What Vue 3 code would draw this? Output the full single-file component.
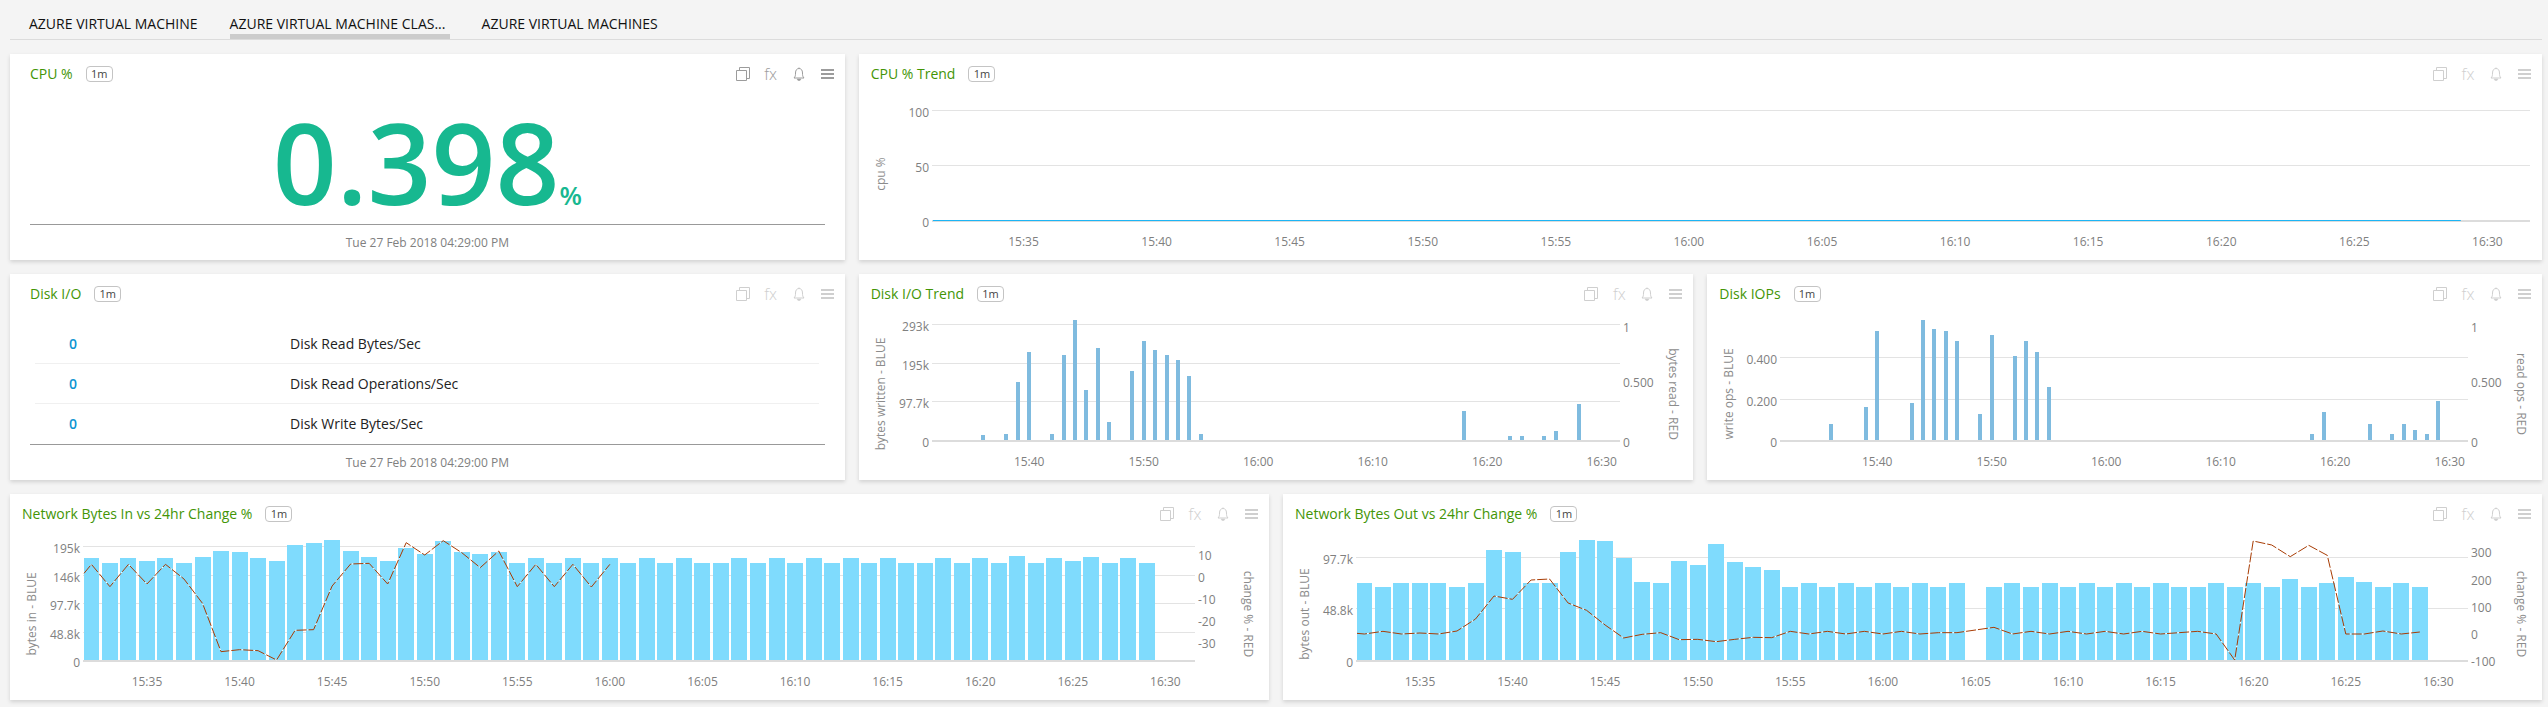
<script setup>
import { onBeforeUnmount, onMounted, reactive, ref } from 'vue'

const tabs = ['AZURE VIRTUAL MACHINE', 'AZURE VIRTUAL MACHINE CLAS...', 'AZURE VIRTUAL MACHINES']
const activeTab = ref(1)

// Minutes are counted from 15:00. Every chart shows one hour of data.
const START = 31.6
const SPAN = 60
const BASE = 126

const series = (first, levels) =>
  levels.map((level, i) => [first + i, level]).filter((p) => p[1] !== null)

// Levels are on a 360-step scale over the 120px plot height.
const rise = (level) => level / 3

const every = (first, step) => {
  const out = []
  for (let m = first; m <= 90; m += step) {
    out.push({ m, text: `${m < 60 ? 15 : 16}:${String(m % 60).padStart(2, '0')}` })
  }
  return out
}

const stamp = 'Tue 27 Feb 2018 04:29:00 PM'

const cards = [
  { id: 'cpu', title: 'CPU %', kind: 'number', size: 'third', value: '0.398', unit: '%' },
  {
    id: 'cpu-trend', title: 'CPU % Trend', kind: 'chart', size: 'wide', right: 12,
    grid: [[16, '100'], [71, '50'], [126, '0']], ticks: every(35, 5),
    leftTitle: 'cpu %', flat: [START, 89]
  },
  {
    id: 'disk', title: 'Disk I/O', kind: 'table', size: 'third',
    rows: [['0', 'Disk Read Bytes/Sec'], ['0', 'Disk Read Operations/Sec'], ['0', 'Disk Write Bytes/Sec']]
  },
  {
    id: 'disk-trend', title: 'Disk I/O Trend', kind: 'chart', size: 'third', right: 74,
    grid: [[10, '293k'], [49, '195k'], [87, '97.7k'], [126, '0']], ticks: every(40, 10),
    leftTitle: 'bytes written - BLUE', rightTitle: 'bytes read - RED',
    rightTicks: [[18, '1'], [73, '0.500'], [133, '0']],
    tone: 'steel', barWidth: 4,
    bars: [[36, 15], [38, 18], [39, 174], [40, 264], [42, 18], [43, 255], [44, 360], [45, 150], [46, 276],
      [47, 54], [49, 207], [50, 297], [51, 270], [52, 255], [53, 240], [54, 192], [55, 18], [78, 87],
      [82, 12], [83, 12], [85, 12], [86, 27], [88, 108]]
  },
  {
    id: 'disk-iops', title: 'Disk IOPs', kind: 'chart', size: 'third', right: 74,
    grid: [[43, '0.400'], [85, '0.200'], [126, '0']], ticks: every(40, 10),
    leftTitle: 'write ops - BLUE', rightTitle: 'read ops - RED',
    rightTicks: [[18, '1'], [73, '0.500'], [133, '0']],
    tone: 'steel', barWidth: 4,
    bars: [[36, 48], [39, 99], [40, 327], [43, 111], [44, 360], [45, 333], [46, 327], [47, 297], [49, 78],
      [50, 315], [52, 252], [53, 297], [54, 264], [55, 159], [78, 18], [79, 84], [83, 48], [85, 18],
      [86, 48], [87, 30], [88, 18], [89, 117]]
  },
  {
    id: 'net-in', title: 'Network Bytes In vs 24hr Change %', kind: 'chart', size: 'half', right: 74,
    grid: [[12, '195k'], [41, '146k'], [69, '97.7k'], [98, '48.8k'], [126, '0']], ticks: every(35, 5),
    leftTitle: 'bytes in - BLUE', rightTitle: 'change % - RED',
    rightTicks: [[26, '10'], [48, '0'], [70, '-10'], [92, '-20'], [114, '-30']],
    tone: 'sky', barWidth: 16,
    bars: series(32, [306, 291, 306, 297, 306, 291, 309, 327, 324, 306, 297, 345, 351, 360, 327, 309, 297,
      336, 318, 357, 324, 318, 324, 291, 306, 291, 306, 291, 306, 291, 306, 291, 306, 291, 291, 306, 291,
      306, 291, 306, 291, 306, 291, 306, 291, 291, 306, 291, 306, 291, 312, 291, 306, 297, 309, 291, 306, 291]),
    line: [[START, 260], ...series(32, [287, 220, 287, 228, 287, 243, 170, 25, 31, 28, 0, 89, 91, 222, 288,
      290, 228, 352, 315, 358, 322, 277, 327, 220, 287, 220, 287, 219, 287])]
  },
  {
    id: 'net-out', title: 'Network Bytes Out vs 24hr Change %', kind: 'chart', size: 'half', right: 74,
    grid: [[23, '97.7k'], [74, '48.8k'], [126, '0']], ticks: every(35, 5),
    leftTitle: 'bytes out - BLUE', rightTitle: 'change % - RED',
    rightTicks: [[23, '300'], [51, '200'], [78, '100'], [105, '0'], [132, '-100']],
    tone: 'sky', barWidth: 16,
    bars: series(32, [231, 219, 231, 231, 231, 219, 231, 330, 324, 231, 231, 324, 360, 357, 306, 234, 231,
      297, 285, 348, 294, 279, 270, 219, 231, 219, 231, 219, 231, 219, 231, 219, 231, null, 219, 231, 219,
      231, 219, 231, 219, 231, 219, 231, 219, 219, 231, 219, 231, 219, 243, 219, 231, 249, 234, 219, 231, 219]),
    line: [[START, 80], ...series(32, [78, 86, 78, 81, 78, 87, 123, 192, 182, 240, 243, 171, 149, 105, 66, 77,
      82, 61, 62, 55, 62, 68, 67, 86, 78, 86, 78, 86, 78, 86, 78, 82, 82, null, 98, 78, 86, 78, 86, 78, 86,
      78, 86, 78, 82, 86, 78, 0, 357, 345, 310, 344, 314, 78, 78, 87, 78, 84])]
  }
]

const LEFT = 74
const widths = reactive({})
const nodes = {}
const setNode = (id) => (el) => { if (el) nodes[id] = el }

const plotRight = (c) => (widths[c.id] || 0) - c.right
const xAt = (c, m) => LEFT + ((m - START) / SPAN) * (plotRight(c) - LEFT)
const barBox = (c, [m, level]) => {
  const left = Math.max(LEFT, Math.round(xAt(c, m) - c.barWidth / 2))
  const end = Math.round(xAt(c, m) - c.barWidth / 2) + c.barWidth
  return { x: left, y: BASE - rise(level), width: Math.max(0, end - left), height: rise(level) }
}
const points = (c) => c.line.map(([m, level]) => `${xAt(c, m)},${BASE - rise(level)}`).join(' ')

let observer
const measure = () => {
  for (const id in nodes) widths[id] = nodes[id].clientWidth
}
onMounted(() => {
  measure()
  observer = new ResizeObserver(measure)
  Object.values(nodes).forEach((el) => observer.observe(el))
})
onBeforeUnmount(() => observer.disconnect())
</script>

<template>
  <div class="page">
    <nav class="tabs" role="tablist">
      <button
        v-for="(tab, i) in tabs"
        :key="tab"
        type="button"
        role="tab"
        class="tab"
        :class="{ active: i === activeTab }"
        :aria-selected="i === activeTab"
        @click="activeTab = i"
      >{{ tab }}</button>
    </nav>

    <main class="board">
      <section v-for="c in cards" :key="c.id" class="card" :class="[c.size, c.kind]">
        <header class="head">
          <h2 class="title">{{ c.title }}</h2>
          <span class="badge">1m</span>
          <div class="tools" :class="{ strong: c.id === 'cpu' }">
            <button type="button" class="tool" aria-label="Copy">
              <svg width="14" height="16" viewBox="0 0 14 16">
                <path d="M3.5 4V1.500H13.500V12.500H10.500M.5 4.500H10.500V14.500H.5Z" fill="none" stroke="currentColor" />
              </svg>
            </button>
            <button type="button" class="tool fx" aria-label="Function">fx</button>
            <button type="button" class="tool" aria-label="Alert">
              <svg width="14" height="16" viewBox="0 0 14 16">
                <path d="M2 12C3.500 10.500 3.500 9 3.500 7C3.500 4 5 2.500 7 2.500S10.500 4 10.500 7C10.500 9 10.500 10.500 12 12Z" fill="none" stroke="currentColor" />
                <path d="M7 2.500V1M5 13H9L8 14.500H6Z" fill="currentColor" stroke="currentColor" stroke-width=".5" />
              </svg>
            </button>
            <button type="button" class="tool" aria-label="Menu">
              <svg width="14" height="16" viewBox="0 0 14 16">
                <path d="M1 4H14M1 8H14M1 12H14" stroke="currentColor" stroke-width="2" />
              </svg>
            </button>
          </div>
        </header>

        <template v-if="c.kind === 'number'">
          <div class="body big">
            <span class="value">{{ c.value }}</span><span class="unit">{{ c.unit }}</span>
          </div>
          <footer class="foot">{{ stamp }}</footer>
        </template>

        <template v-else-if="c.kind === 'table'">
          <div class="body list">
            <table class="rows">
              <tbody>
                <tr v-for="row in c.rows" :key="row[1]">
                  <td class="count">{{ row[0] }}</td>
                  <th scope="row" class="name">{{ row[1] }}</th>
                </tr>
              </tbody>
            </table>
          </div>
          <footer class="foot">{{ stamp }}</footer>
        </template>

        <div v-else :ref="setNode(c.id)" class="plot">
          <svg v-if="widths[c.id]" class="canvas" :width="widths[c.id]" height="166">
            <g v-for="g in c.grid" :key="g[1]">
              <rect class="grid" :class="{ axis: g[0] === BASE }" :x="LEFT - 1" :y="g[0]" :width="plotRight(c) - LEFT + 1" :height="g[0] === BASE ? 2 : 1" />
              <text :x="LEFT - 4" :y="g[0] + 7" text-anchor="end">{{ g[1] }}</text>
            </g>
            <text v-for="t in c.ticks" :key="t.text" :x="xAt(c, t.m)" y="152" text-anchor="middle">{{ t.text }}</text>
            <text v-for="r in c.rightTicks" :key="r[1]" :x="plotRight(c) + 3" :y="r[0]">{{ r[1] }}</text>
            <rect v-for="b in c.bars" :key="b[0]" :class="c.tone" v-bind="barBox(c, b)" />
            <rect v-if="c.flat" class="flat" :x="LEFT" :y="BASE" :width="xAt(c, c.flat[1]) - LEFT" height="1" />
            <template v-if="c.line">
              <polyline class="gaps" :points="points(c)" />
              <polyline class="change" :points="points(c)" />
            </template>
            <text class="axis-title" text-anchor="middle" transform="translate(26 80) rotate(-90)">{{ c.leftTitle }}</text>
            <text v-if="c.rightTitle" class="axis-title" text-anchor="middle" :transform="`translate(${widths[c.id] - 25} 80) rotate(90)`">{{ c.rightTitle }}</text>
          </svg>
        </div>
      </section>
    </main>
  </div>
</template>

<style>
body {
  background: #f4f4f4;
}
</style>

<style scoped>
.page {
  padding: 10px 6px 7px 10px;
  background: #f4f4f4;
  font-family: "Open Sans", "Noto Sans", sans-serif;
}
button {
  border: 0;
  padding: 0;
  background: none;
  font: inherit;
  cursor: pointer;
}
.tabs {
  display: flex;
  gap: 32px;
  padding: 0 19px;
  border-bottom: 1px solid #dcdcdc;
}
.tab {
  box-sizing: border-box;
  height: 29px;
  padding-top: 4px;
  border-bottom: 5px solid transparent;
  font-size: 14px;
  line-height: 20px;
  color: #111;
  text-align: left;
}
.tab.active {
  min-width: 220px;
  border-bottom-color: #ccc;
}
.board {
  display: grid;
  grid-template-columns: repeat(6, 1fr);
  gap: 14px;
  margin-top: 14px;
}
.card {
  min-width: 0;
  background: #fff;
  box-shadow: 0 2px 4px rgba(0, 0, 0, 0.14);
}
.third {
  grid-column: span 2;
}
.half {
  grid-column: span 3;
}
.wide {
  grid-column: span 4;
}
.head {
  display: flex;
  align-items: center;
  height: 40px;
  padding: 0 11px 0 12px;
}
.number .head,
.table .head {
  padding-left: 20px;
}
.title {
  margin: 0;
  font-size: 14px;
  line-height: 20px;
  font-weight: 400;
  color: #439506;
  white-space: nowrap;
}
.badge {
  box-sizing: border-box;
  margin-left: 13px;
  width: 27px;
  height: 16px;
  border: 1px solid #c4c4c4;
  border-radius: 4px;
  font-size: 11px;
  line-height: 14px;
  text-align: center;
  color: #444;
}
.tools {
  display: flex;
  align-items: center;
  gap: 14px;
  margin-left: auto;
  color: #cfcfcf;
}
.tools.strong {
  color: #9c9c9c;
}
.tool {
  display: flex;
  color: inherit;
}
.fx {
  justify-content: center;
  width: 14px;
  font-size: 16px;
  line-height: 24px;
  font-weight: 300;
}
.body {
  height: 130px;
  margin: 0 20px;
  border-bottom: 1px solid #999;
}
.big {
  display: flex;
  justify-content: center;
  align-items: baseline;
  color: #17b890;
  font-weight: 600;
  line-height: 136px;
}
.value {
  font-size: 112px;
}
.unit {
  font-size: 26px;
}
.foot {
  height: 35px;
  line-height: 35px;
  text-align: center;
  font-size: 12px;
  color: #808080;
}
.list {
  box-sizing: border-box;
  height: 131px;
  padding: 10px 6px 0 5px;
}
.rows {
  width: 100%;
  border-collapse: collapse;
  table-layout: fixed;
  font-size: 14px;
}
.rows td,
.rows th {
  height: 39px;
  padding: 0;
  border-bottom: 1px solid #f0f0f0;
  text-align: left;
  font-weight: 400;
}
.rows tr:last-child td,
.rows tr:last-child th {
  border-bottom: 0;
}
.rows .count {
  width: 221px;
  padding-left: 34px;
  color: #0d94d2;
  font-weight: 600;
}
.name {
  color: #222;
}
.plot {
  height: 166px;
  overflow: hidden;
}
.canvas {
  display: block;
}
.canvas text {
  font-size: 12px;
  fill: #808080;
}
.canvas .axis-title {
  fill: #8c8c8c;
}
.grid {
  fill: #e3e3e3;
}
.grid.axis {
  fill: #dcdcdc;
}
.steel {
  fill: #7fbbdf;
}
.sky {
  fill: #7fdbfd;
}
.flat {
  fill: #1cb5f5;
}
.gaps,
.change {
  fill: none;
  stroke-width: 1;
}
.change {
  stroke: #a83c04;
  stroke-dasharray: 10 2;
}
.gaps {
  stroke: #fff;
  stroke-dasharray: 2 10;
  stroke-dashoffset: -10;
}
</style>
